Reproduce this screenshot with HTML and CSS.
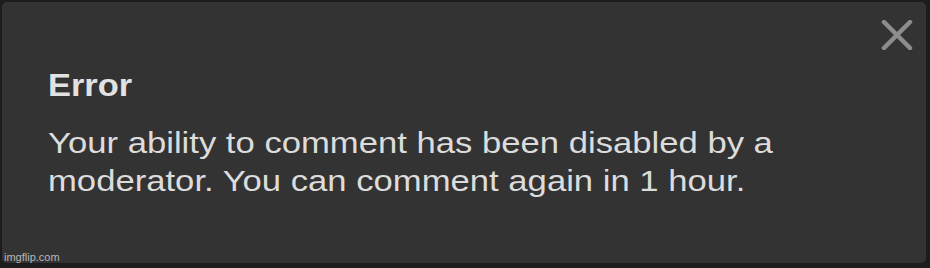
FILE: index.html
```html
<!DOCTYPE html>
<html lang="en">
<head>
    <meta charset="UTF-8">
    <meta name="viewport" content="width=device-width, initial-scale=1.0">
    <title>Error</title>
    <link rel="stylesheet" href="styles.css">
</head>
<body>
    <div class="dialog">
        <button class="close" aria-label="Close">
            <svg width="32" height="30" viewBox="0 0 32 30">
                <path d="M3 2 L29 28 M29 2 L3 28" stroke="#8d8d8d" stroke-width="4.5" stroke-linecap="round" fill="none"/>
            </svg>
        </button>
        <h2 class="title">Error</h2>
        <p class="message">Your ability to comment has been disabled by a<br>moderator. You can comment again in 1 hour.</p>
    </div>
    <span class="watermark">imgflip.com</span>
</body>
</html>
```

FILE: styles.css
```css
body {
    font-family: "Liberation Sans", Arial, sans-serif;
    background-color: #1c1c1c;
    margin: 0;
    padding: 2px 4px 5px 2px;
    height: 268px;
    box-sizing: border-box;
    position: relative;
    overflow: hidden;
}

.dialog {
    position: relative;
    background: #333333;
    border-radius: 5px;
    height: 261px;
    box-sizing: border-box;
    padding: 66px 40px 0 46px;
}

.close {
    position: absolute;
    top: 18px;
    right: 13px;
    background: none;
    border: none;
    padding: 0;
    cursor: pointer;
}

.close svg {
    display: block;
}

.title,
.message {
    width: max-content;
    transform-origin: left center;
}

.title {
    margin: 0;
    font-size: 31px;
    line-height: 36px;
    font-weight: bold;
    color: #e2e2e2;
    transform: scaleX(1.11);
}

.message {
    margin: 20px 0 0;
    font-size: 30px;
    line-height: 38px;
    color: #dcdcdc;
    transform: scaleX(1.155);
}

.watermark {
    position: absolute;
    left: 4px;
    bottom: 5px;
    font-size: 11px;
    color: #b8b8b8;
}
```
